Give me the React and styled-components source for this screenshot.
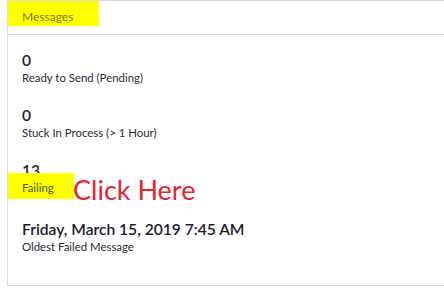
import React from "react";
import styled, { createGlobalStyle } from "styled-components";

const Global = createGlobalStyle`
  html, body { margin: 0; padding: 0; background: #fff; overflow: hidden; }
  body { font-family: Lato, "Open Sans", sans-serif; color: #222; }
`;

const Page = styled.div`
  width: 444px;
  height: 294px;
  overflow: hidden;
  padding-left: 7px;
  box-sizing: border-box;
`;

const Card = styled.section`
  width: 470px;
  height: 286px;
  box-sizing: border-box;
  border: 1px solid #dcdcdc;
  background: #fff;
  display: flex;
  flex-direction: column;
`;

const Header = styled.header`
  height: 34px;
  box-sizing: border-box;
  border-bottom: 1px solid #dcdcdc;
  display: flex;
  align-items: flex-start;
`;

const Title = styled.h2`
  margin: 0;
  width: 91px;
  height: 25px;
  box-sizing: border-box;
  padding: 8px 0 0 14px;
  background: #ffff00;
  font-size: 12px;
  line-height: 15px;
  font-weight: 400;
  color: #7a7a10;
`;

const Body = styled.div`
  padding: 15px 14px 0 14px;
  display: flex;
  flex-direction: column;
  gap: 20px;
`;

const Stat = styled.div`
  display: flex;
  flex-direction: column;
`;

const Value = styled.div`
  font-size: 15.6px;
  line-height: 20px;
  font-weight: 600;
  color: #1c1c2c;
`;

const LabelRow = styled.div`
  display: flex;
  align-items: flex-start;
`;

const Label = styled.div`
  font-size: 11.4px;
  line-height: 15px;
  color: ${(p) => (p.$highlight ? "#3f5a00" : "#2a2a3a")};
  ${(p) =>
    p.$highlight &&
    `
    background: #ffff00;
    width: 66px;
    box-sizing: border-box;
    margin: -7px 0 -4px -14px;
    padding: 7px 0 4px 14px;
  `}
`;

const ClickHere = styled.span`
  font-size: 27px;
  line-height: 26px;
  color: #e8232e;
  margin: -3px 0 -4px -1px;
`;

const stats = [
  { value: "0", label: "Ready to Send (Pending)" },
  { value: "0", label: "Stuck In Process (> 1 Hour)" },
  { value: "13", label: "Failing", highlight: true, annotation: "Click Here" },
  { value: "Friday, March 15, 2019 7:45 AM", label: "Oldest Failed Message" },
];

export default function App() {
  return (
    <>
      <Global />
      <Page>
        <Card>
          <Header>
            <Title>Messages</Title>
          </Header>
          <Body>
            {stats.map((s, i) => (
              <Stat key={i}>
                <Value>{s.value}</Value>
                <LabelRow>
                  <Label $highlight={s.highlight}>{s.label}</Label>
                  {s.annotation && <ClickHere>{s.annotation}</ClickHere>}
                </LabelRow>
              </Stat>
            ))}
          </Body>
        </Card>
      </Page>
    </>
  );
}
